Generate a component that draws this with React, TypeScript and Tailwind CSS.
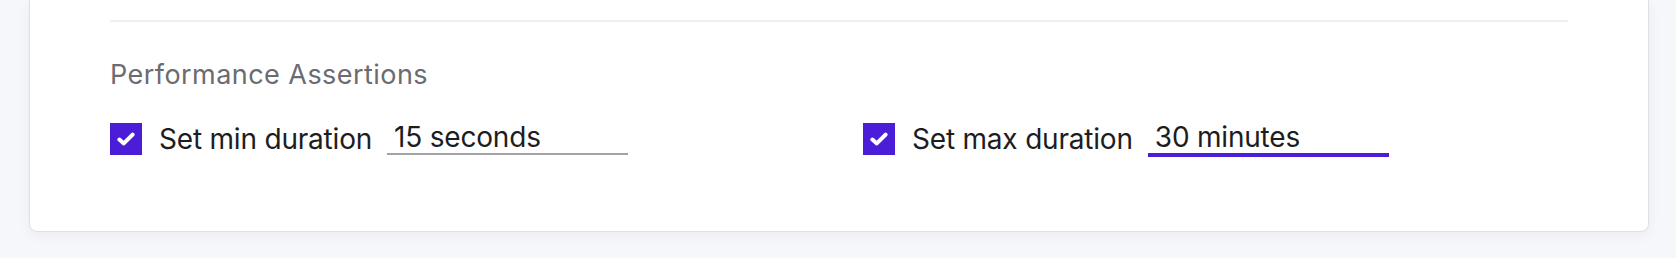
import React, { useState } from 'react';

function CheckBox({ checked, onChange }: { checked: boolean; onChange: (v: boolean) => void }) {
  return (
    <button
      type="button"
      onClick={() => onChange(!checked)}
      className={
        checked
          ? 'flex h-[32px] w-[32px] shrink-0 items-center justify-center bg-[#4b1dd8]'
          : 'flex h-[32px] w-[32px] shrink-0 items-center justify-center border-2 border-[#9a9aa0] bg-white'
      }
    >
      {checked && (
        <svg width="18" height="14" viewBox="0 0 18 14" fill="none">
          <path
            d="M2.4 7.6 L6.8 11.4 L15.6 2.6"
            stroke="white"
            strokeWidth="4"
            strokeLinecap="round"
            strokeLinejoin="round"
          />
        </svg>
      )}
    </button>
  );
}

interface DurationFieldProps {
  label: string;
  value: string;
  active?: boolean;
}

function DurationField({ label, value, active }: DurationFieldProps) {
  const [checked, setChecked] = useState(true);
  const [text, setText] = useState(value);

  return (
    <div className="flex h-[32px] items-center">
      <CheckBox checked={checked} onChange={setChecked} />
      <span className="ml-[17px] text-[28px] leading-[32px] tracking-[-0.2px] text-[#1d1d21]">{label}</span>
      <input
        value={text}
        onChange={(e) => setText(e.target.value)}
        className={
          active
            ? 'ml-[15px] mt-[2px] h-[34px] w-[241px] border-b-4 border-[#4b1dd8] bg-transparent pl-[7px] pb-[3px] text-[28px] leading-[30px] tracking-[-0.2px] text-[#1d1d21] outline-none'
            : 'ml-[15px] h-[32px] w-[241px] border-b-2 border-[#a3a3a6] bg-transparent pl-[7px] pb-[3px] text-[28px] leading-[30px] tracking-[-0.2px] text-[#1d1d21] outline-none'
        }
      />
    </div>
  );
}

export default function App() {
  return (
    <div className="min-h-[258px] bg-[#f6f7fa] pb-[26px] font-['Inter','Liberation_Sans',sans-serif]">
      <div className="ml-[29px] mr-[27px] rounded-b-[8px] border border-t-0 border-[#dfdfe4] bg-white px-[80px] pt-[20px] pb-[76px] shadow-[0_3px_14px_rgba(30,40,90,0.05)]">
        <div className="h-[2px] bg-[#eeeff3]" />

        <h3 className="mt-[37px] text-[27px] leading-[32px] tracking-[0.45px] text-[#6b6b71]">
          Performance Assertions
        </h3>

        <div className="mt-[32px] grid grid-cols-2 gap-x-[48px]">
          <DurationField label="Set min duration" value="15 seconds" />
          <DurationField label="Set max duration" value="30 minutes" active />
        </div>
      </div>
    </div>
  );
}
